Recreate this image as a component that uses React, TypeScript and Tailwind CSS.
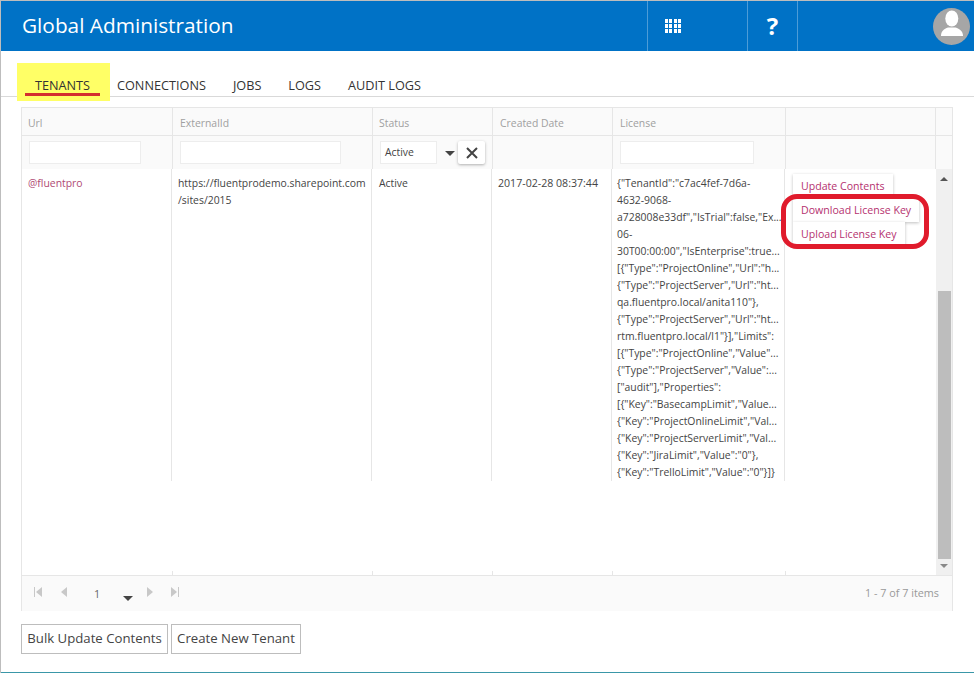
const licenseLines = [
  '{"TenantId":"c7ac4fef-7d6a-',
  '4632-9068-',
  'a728008e33df","IsTrial":false,"Ex...',
  '06-',
  '30T00:00:00","IsEnterprise":true...',
  '[{"Type":"ProjectOnline","Url":"h...',
  '{"Type":"ProjectServer","Url":"ht...',
  'qa.fluentpro.local/anita110"},',
  '{"Type":"ProjectServer","Url":"ht...',
  'rtm.fluentpro.local/l1"}],"Limits":',
  '[{"Type":"ProjectOnline","Value"...',
  '{"Type":"ProjectServer","Value":...',
  '["audit"],"Properties":',
  '[{"Key":"BasecampLimit","Value...',
  '{"Key":"ProjectOnlineLimit","Val...',
  '{"Key":"ProjectServerLimit","Val...',
  '{"Key":"JiraLimit","Value":"0"},',
  '{"Key":"TrelloLimit","Value":"0"}]}',
]

const tabs = ['CONNECTIONS', 'JOBS', 'LOGS', 'AUDIT LOGS']

function GridIcon() {
  return (
    <div className="grid grid-cols-4 gap-x-[1.3px] gap-y-[1px]">
      {Array.from({ length: 12 }).map((_, i) => (
        <div key={i} className="w-[3px] h-[4px] bg-white" />
      ))}
    </div>
  )
}

function ActionButton({ label }: { label: string }) {
  return (
    <div className="w-fit h-[24px] px-[8px] flex items-center bg-white text-[#b5316f] text-[10.6px] shadow-[0_1px_3px_rgba(0,0,0,0.25)]">
      {label}
    </div>
  )
}

function PagerArrow({ dir, bar }: { dir: 'left' | 'right'; bar?: boolean }) {
  return (
    <svg width="8" height="10" viewBox="0 0 8 10" className="text-[#c8c8c8]" fill="currentColor">
      {dir === 'left' ? <path d={bar ? 'M2 5l6-5v10z' : 'M1 5l6-5v10z'} /> : <path d={bar ? 'M6 5L0 0v10z' : 'M7 5L1 0v10z'} />}
      {bar && <rect x={dir === 'left' ? 0 : 7} y="0" width="1" height="10" />}
    </svg>
  )
}

export default function App() {
  return (
    <div className="w-[974px] h-[673px] overflow-hidden relative bg-white text-[#444] font-['Open_Sans',sans-serif] border-t border-l border-[#bdbdbd] flex flex-col">
      {/* Header */}
      <div className="h-[50px] shrink-0 bg-[#0072c6] flex items-stretch text-white">
        <div className="pl-[21px] flex-1 flex items-center text-[20.8px]">Global Administration</div>
        <div className="w-[100px] border-l border-[#4d9cd7] flex items-center pl-[17px]">
          <GridIcon />
        </div>
        <div className="w-[50px] border-l border-[#4d9cd7] flex items-center justify-center text-[24px] font-bold">?</div>
        <div className="w-[177px] border-l border-[#4d9cd7] flex items-center justify-end pr-[4px]">
          <svg width="37" height="37" viewBox="0 0 37 37">
            <circle cx="18.5" cy="18.5" r="18.5" fill="#a6a6a6" />
            <ellipse cx="18.8" cy="10.5" rx="6.5" ry="8" fill="white" />
            <path d="M8 28C8 23 11 21 15 19.500h7.500C26.500 21 30 23 30 28z" fill="white" />
          </svg>
        </div>
      </div>

      {/* Tabs */}
      <div className="h-[46px] shrink-0 border-b border-[#d9d9d9] relative flex items-end pl-[16px] text-[12.7px] leading-[16px] text-[#333]">
        <div className="absolute left-[16px] top-[12px] w-[93px] h-[38px] bg-[#ffff66]" />
        <div className="relative w-[93px] h-[19px] pl-[8px]">
          <span className="block w-[75px] text-center h-[19px] border-b-[3px] border-[#d32f2f]">TENANTS</span>
        </div>
        <div className="relative h-[19px] flex gap-[27px] ml-[7px]">
          {tabs.map(t => (
            <span key={t}>{t}</span>
          ))}
        </div>
      </div>

      {/* Grid */}
      <div className="relative mt-[10px] ml-[20px] w-[932px] h-[504px] border-l border-r border-t border-[#e6e6e6] flex flex-col text-[10.4px]">
        <div className="h-[28px] shrink-0 flex bg-[#fafafa] border-b border-[#e6e6e6] text-[#a0a0a0]">
          <div className="w-[151px] px-[6px] pt-[4px] flex items-center border-r border-[#e6e6e6]">Url</div>
          <div className="w-[200px] px-[7px] pt-[4px] flex items-center border-r border-[#e6e6e6]">ExternalId</div>
          <div className="w-[120px] px-[6px] pt-[4px] flex items-center border-r border-[#e6e6e6]">Status</div>
          <div className="w-[120px] px-[7px] pt-[4px] flex items-center border-r border-[#e6e6e6]">Created Date</div>
          <div className="w-[173px] px-[7px] pt-[4px] flex items-center border-r border-[#e6e6e6]">License</div>
          <div className="w-[150px] border-r border-[#e6e6e6]" />
        </div>

        <div className="h-[33px] shrink-0 flex bg-[#fafafa]">
          <div className="w-[151px] pl-[7px] pt-[5px] border-r border-[#e6e6e6]">
            <div className="w-[112px] h-[23px] bg-white border border-[#ededed]" />
          </div>
          <div className="w-[200px] pl-[7px] pt-[5px] border-r border-[#e6e6e6]">
            <div className="w-[161px] h-[23px] bg-white border border-[#ededed]" />
          </div>
          <div className="w-[120px] pl-[7px] pt-[5px] border-r border-[#e6e6e6] relative">
            <div className="w-[57px] h-[23px] bg-white border border-[#ededed] flex items-center pl-[4px] text-[#444]">Active</div>
            <div className="absolute left-[72px] top-[15px] w-0 h-0 border-l-[5px] border-r-[5px] border-t-[5px] border-l-transparent border-r-transparent border-t-[#444]" />
            <div className="absolute left-[85px] top-[5px] w-[27px] h-[23px] bg-white rounded-[2px] shadow-[0_1px_3px_rgba(0,0,0,0.3)] flex items-center justify-center">
              <svg width="12" height="12" viewBox="0 0 12 12" stroke="#444" strokeWidth="2">
                <path d="M1 1l10 10M11 1L1 11" />
              </svg>
            </div>
          </div>
          <div className="w-[120px] border-r border-[#e6e6e6]" />
          <div className="w-[173px] pl-[7px] pt-[5px] border-r border-[#e6e6e6]">
            <div className="w-[134px] h-[23px] bg-white border border-[#ededed]" />
          </div>
          <div className="w-[150px] border-r border-[#e6e6e6]" />
        </div>

        {/* Body */}
        <div className="flex-1 flex min-h-0 relative">
          <div className="flex-1 flex flex-col">
            <div className="h-[312px] flex leading-[17px] text-[#444]">
              <div className="w-[150px] px-[6px] pt-[6px] border-r border-[#e6e6e6] text-[#b04a74]">@fluentpro</div>
              <div className="w-[200px] pl-[6px] pr-[6px] pt-[6px] border-r border-[#e6e6e6] whitespace-nowrap">
                <div>https://fluentprodemo.sharepoint.com</div>
                <div>/sites/2015</div>
              </div>
              <div className="w-[120px] px-[7px] pt-[6px] border-r border-[#e6e6e6]">Active</div>
              <div className="w-[120px] px-[6px] pt-[6px] border-r border-[#e6e6e6] text-[10.6px]">2017-02-28 08:37:44</div>
              <div className="w-[173px] pl-[5px] pt-[6px] border-r border-[#e6e6e6] whitespace-nowrap overflow-hidden">
                {licenseLines.map((line, i) => (
                  <div key={i}>{line}</div>
                ))}
              </div>
              <div className="flex-1 pl-[8px] pt-[5px] flex flex-col">
                <ActionButton label="Update Contents" />
                <ActionButton label="Download License Key" />
                <ActionButton label="Upload License Key" />
              </div>
            </div>
          </div>
          <div className="w-[16px] shrink-0 bg-[#f0f0f0] flex flex-col items-end pr-[1px]">
            <div className="w-full h-[122px] relative">
              <div className="absolute left-[4px] top-[8px] w-0 h-0 border-l-[4px] border-r-[4px] border-b-[4px] border-l-transparent border-r-transparent border-b-[#555]" />
            </div>
            <div className="w-[13px] h-[268px] bg-[#bdbdbd]" />
            <div className="w-full flex-1 relative">
              <div className="absolute left-[4px] top-[5px] w-0 h-0 border-l-[4px] border-r-[4px] border-t-[4px] border-l-transparent border-r-transparent border-t-[#888]" />
            </div>
          </div>
          <div className="absolute inset-x-0 bottom-0 h-[4px] pointer-events-none flex">
            <div className="w-[151px] border-r border-[#e6e6e6]" />
            <div className="w-[200px] border-r border-[#e6e6e6]" />
            <div className="w-[120px] border-r border-[#e6e6e6]" />
            <div className="w-[120px] border-r border-[#e6e6e6]" />
            <div className="w-[173px] border-r border-[#e6e6e6]" />
          </div>
        </div>

        {/* Pager */}
        <div className="h-[36px] shrink-0 bg-[#fafafa] border-t border-[#e6e6e6] flex items-center text-[#888] text-[10.8px]">
          <div className="ml-[12px] mb-[4px]"><PagerArrow dir="left" bar /></div>
          <div className="ml-[18px] mb-[4px]"><PagerArrow dir="left" /></div>
          <span className="ml-[26px] mt-[1px] text-[#666]">1</span>
          <div className="ml-[23px] mt-[9px] w-0 h-0 border-l-[5px] border-r-[5px] border-t-[5px] border-l-transparent border-r-transparent border-t-[#444]" />
          <div className="ml-[13px] mb-[4px]"><PagerArrow dir="right" /></div>
          <div className="ml-[17px] mb-[4px]"><PagerArrow dir="right" bar /></div>
          <span className="ml-auto mr-[13px] text-[#999]">1 - 7 of 7 items</span>
        </div>
      </div>

      {/* Bottom buttons */}
      <div className="mt-[13px] ml-[20px] flex gap-[3px] text-[13.2px] text-[#444]">
        <div className="h-[30px] w-[147px] border border-[#bdbdbd] flex items-center justify-center">Bulk Update Contents</div>
        <div className="h-[30px] w-[130px] border border-[#bdbdbd] flex items-center justify-center">Create New Tenant</div>
      </div>

      <div className="absolute left-0 right-0 bottom-0 h-[1px] bg-[#3a97a8]" />

      {/* Red annotation around the license buttons */}
      <div className="absolute left-[780px] top-[193px] w-[148px] h-[55px] border-[5px] border-[#e01b2c] rounded-[16px]" />
    </div>
  )
}
